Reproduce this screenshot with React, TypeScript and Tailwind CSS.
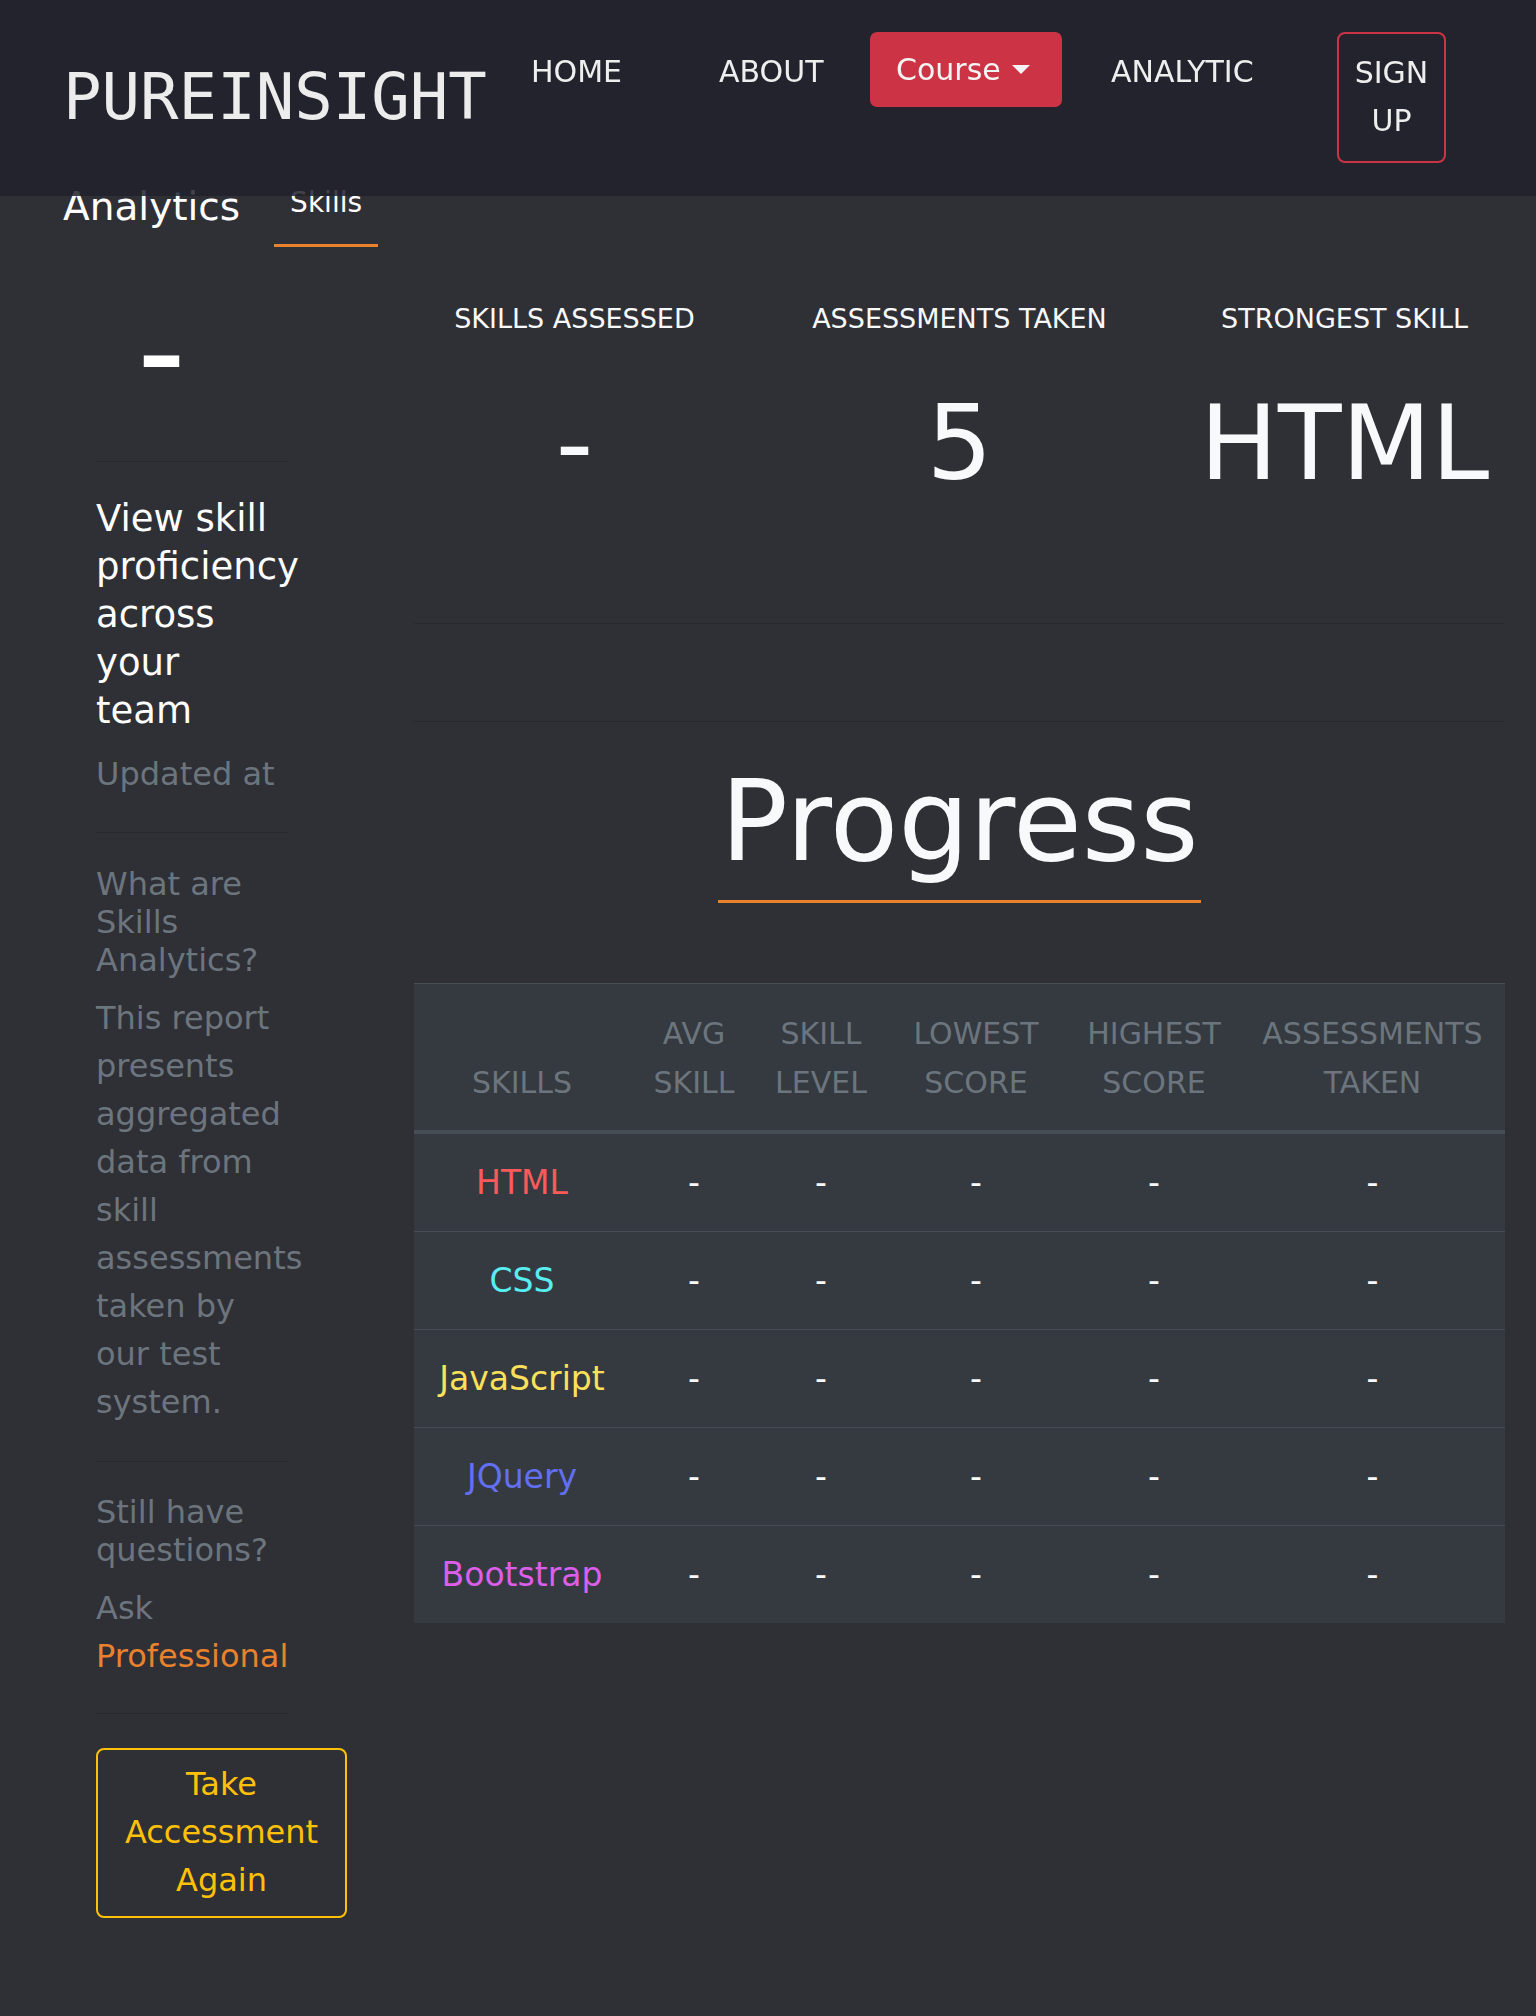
import React from 'react';

const stats = [
	{ label: 'SKILLS ASSESSED', value: '-' },
	{ label: 'ASSESSMENTS TAKEN', value: '5' },
	{ label: 'STRONGEST SKILL', value: 'HTML' },
];

const columns = [
	{ label: 'SKILLS', width: 'w-[216px]' },
	{ label: 'AVG SKILL', width: 'w-[128px]' },
	{ label: 'SKILL LEVEL', width: 'w-[126px]' },
	{ label: 'LOWEST SCORE', width: 'w-[184px]' },
	{ label: 'HIGHEST SCORE', width: 'w-[172px]' },
	{ label: 'ASSESSMENTS TAKEN', width: '' },
];

const skills = [
	{ name: 'HTML', color: 'text-[#fa5a5a]' },
	{ name: 'CSS', color: 'text-[#58eef0]' },
	{ name: 'JavaScript', color: 'text-[#fce05a]' },
	{ name: 'JQuery', color: 'text-[#636ff2]' },
	{ name: 'Bootstrap', color: 'text-[#dc5ee9]' },
];

function Divider() {
	return <div className="h-px w-[193px] bg-[#28282e]" />;
}

function Navbar() {
	return (
		<nav className="fixed inset-x-0 top-0 z-10 h-[196px] bg-[#21212b]/85">
			<div className="flex items-start pl-[63px] pt-[32px] text-[30px] leading-[36px] text-[#eeeeee]">
				<a className="w-[468px] pt-[33px] font-['DejaVu_Sans_Mono',monospace] text-[64px] leading-[64px] text-[#ececec]">
					PUREINSIGHT
				</a>
				<a className="mt-[22px] w-[188px]">HOME</a>
				<a className="mt-[22px] w-[151px]">ABOUT</a>
				<button className="flex h-[75px] w-[192px] items-center rounded-[7px] bg-[#cc3446] pl-[26px] text-[#f4f4f4]">
					Course
					<span className="ml-[11px] h-0 w-0 border-x-[9px] border-t-[9px] border-x-transparent border-t-[#f4f4f4]" />
				</button>
				<a className="ml-[49px] mt-[22px] w-[226px]">ANALYTIC</a>
				<button className="w-[109px] rounded-[8px] border-2 border-[#cc3446] pb-[16px] pt-[15px] text-center leading-[48px]">
					SIGN UP
				</button>
			</div>
		</nav>
	);
}

function Sidebar() {
	return (
		<aside className="w-[351px] shrink-0 pl-[33px]">
			<div className="pl-[43px] pt-[63px] text-[90px] font-bold leading-[90px] text-white">–</div>
			<div className="mt-[61px]">
				<Divider />
			</div>
			<h3 className="mt-[33px] w-[186px] text-[37px] leading-[48px] text-white">
				View skill proficiency across your team
			</h3>
			<p className="mt-[15px] text-[32px] leading-[48px] text-[#6c757d]">Updated at</p>
			<div className="mt-[34px]">
				<Divider />
			</div>
			<h5 className="mt-[32px] w-[186px] text-[32px] leading-[38px] text-[#6c757d]">
				What are Skills Analytics?
			</h5>
			<p className="mt-[15px] w-[186px] text-[32px] leading-[48px] text-[#6c757d]">
				This report presents aggregated data from skill assessments taken by our test system.
			</p>
			<div className="mt-[35px]">
				<Divider />
			</div>
			<h5 className="mt-[31px] w-[186px] text-[32px] leading-[38px] text-[#6c757d]">
				Still have questions?
			</h5>
			<p className="mt-[15px] w-[186px] text-[32px] leading-[48px] text-[#6c757d]">
				Ask <a className="text-[#e8822c]">Professional</a>
			</p>
			<div className="mt-[33px]">
				<Divider />
			</div>
			<button className="mt-[34px] w-[251px] rounded-[8px] border-2 border-[#ffc107] px-[20px] pb-[12px] pt-[10px] text-center text-[32px] leading-[48px] text-[#ffc107]">
				Take Accessment Again
			</button>
		</aside>
	);
}

function SkillsTable() {
	return (
		<table className="mt-[80px] w-full table-fixed border-t border-[#454d55] bg-[#343a40] text-center">
			<thead>
				<tr className="border-b-4 border-[#454d55]">
					{columns.map((col) => (
						<th
							key={col.label}
							className={`${col.width} px-[12px] pb-[23px] pt-[25px] align-bottom text-[30px] font-normal leading-[49px] text-[#6c757d]`}
						>
							{col.label}
						</th>
					))}
				</tr>
			</thead>
			<tbody>
				{skills.map((skill, i) => (
					<tr key={skill.name} className={i === 0 ? '' : 'border-t border-[#454d55]'}>
						<td className={`py-[24px] text-[33px] leading-[49px] ${skill.color}`}>{skill.name}</td>
						{[0, 1, 2, 3, 4].map((n) => (
							<td key={n} className="py-[24px] text-[33px] leading-[49px] text-[#f8f9fa]">
								-
							</td>
						))}
					</tr>
				))}
			</tbody>
		</table>
	);
}

export default function App() {
	return (
		<div className="min-h-screen bg-[#2f2f36] pb-[60px] pl-[63px] pr-[31px] pt-[183px] font-['DejaVu_Sans',sans-serif] text-[#f8f9fa]">
			<Navbar />

			<div className="flex items-start">
				<h1 className="mr-[34px] text-[39px] leading-[48px] text-white">Analytics</h1>
				<div className="mt-[2px] border-b-[3px] border-[#e8822c] px-[16px] pb-[23px] text-[28px] leading-[36px] text-white">
					Skills
				</div>
			</div>

			<div className="flex items-start">
				<Sidebar />

				<main className="flex-1">
					<div className="grid grid-cols-[1fr_1.4fr_1fr] pt-[54px] text-center">
						{stats.map((stat) => (
							<div key={stat.label}>
								<div className="text-[27px] leading-[36px]">{stat.label}</div>
								<div className="mt-[54px] text-[104px] leading-[104px]">{stat.value}</div>
							</div>
						))}
					</div>

					<div className="mt-[128px] h-px bg-[#28282e]" />
					<div className="mt-[97px] h-px bg-[#28282e]" />

					<div className="mt-[43px] flex justify-center">
						<h2 className="border-b-[3px] border-[#e8822c] px-[3px] pb-[23px] text-[112px] leading-[112px]">
							Progress
						</h2>
					</div>

					<SkillsTable />
				</main>
			</div>
		</div>
	);
}
